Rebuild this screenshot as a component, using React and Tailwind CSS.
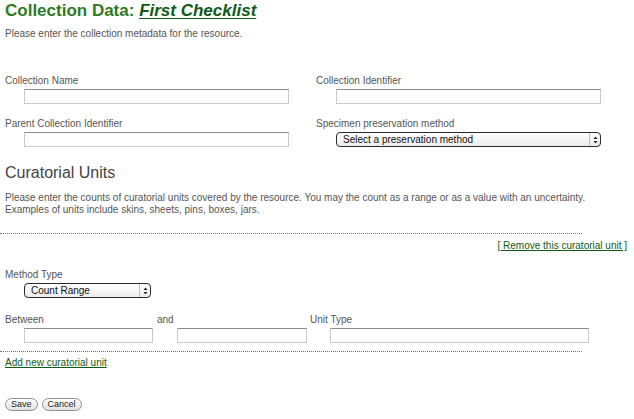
import React from 'react'

const font = { fontFamily: '"Liberation Sans", Arial, sans-serif' }

function TextInput({ className = '' }) {
  return (
    <input
      type="text"
      className={`block h-[15px] border border-[#c9c9c9] border-t-[#8c8c8c] bg-white outline-none ${className}`}
    />
  )
}

function MacSelect({ label, className = '' }) {
  return (
    <div
      className={`flex h-[15px] items-stretch rounded-[4px] border border-[#2a2a2a] bg-gradient-to-b from-white to-[#ececec] ${className}`}
    >
      <span className="flex-1 truncate pl-[6px] text-[10px] leading-[13px] text-[#111]">{label}</span>
      <span className="flex w-[11px] flex-col items-center justify-center border-l border-[#bdbdbd]">
        <svg width="5" height="8" viewBox="0 0 5 8">
          <path d="M2.5 0.5 L4.5 3 L0.5 3 Z" fill="#222" />
          <path d="M2.5 7.5 L4.5 5 L0.5 5 Z" fill="#222" />
        </svg>
      </span>
    </div>
  )
}

function Field({ label, children, className = '' }) {
  return (
    <div className={className}>
      <div className="h-[13px] leading-[13px]">{label}</div>
      <div className="mt-[2px]">{children}</div>
    </div>
  )
}

function Dotted() {
  return <div className="-ml-[5px] w-[582px] border-t border-dotted border-[#777]" />
}

export default function App() {
  return (
    <div className="min-h-[419px] bg-white pl-[5px] text-[10px] text-[#555]" style={font}>
      <h1 className="pt-[1px] text-[17px] font-bold leading-[20px] text-[#2f7a1f]">
        Collection Data:{' '}
        <a href="#" className="italic text-[#0f5a16] underline decoration-1 underline-offset-2">
          First Checklist
        </a>
      </h1>
      <p className="mt-[7px] leading-[12px]">Please enter the collection metadata for the resource.</p>

      <div className="mt-[34px] grid grid-cols-[311px_1fr] gap-y-[13px]">
        <Field label="Collection Name">
          <TextInput className="ml-[19px] w-[265px]" />
        </Field>
        <Field label="Collection Identifier">
          <TextInput className="ml-[20px] w-[265px]" />
        </Field>
        <Field label="Parent Collection Identifier">
          <TextInput className="ml-[19px] w-[265px]" />
        </Field>
        <Field label="Specimen preservation method">
          <MacSelect label="Select a preservation method" className="ml-[20px] mt-[1px] w-[265px]" />
        </Field>
      </div>

      <h2 className="mt-[16px] text-[16px] leading-[20px] text-[#444]">Curatorial Units</h2>
      <p className="mt-[9px] w-[615px] leading-[12px]">
        Please enter the counts of curatorial units covered by the resource. You may the count as a range or as a value with an uncertainty.
        <br />
        Examples of units include skins, sheets, pins, boxes, jars.
      </p>

      <div className="mt-[17px]">
        <Dotted />
      </div>
      <div className="mt-[5px] flex w-[622px] justify-end leading-[13px]">
        <a href="#" className="text-[#0f5a16] underline">[ Remove this curatorial unit ]</a>
      </div>

      <Field label="Method Type" className="mt-[16px]">
        <MacSelect label="Count Range" className="ml-[19px] w-[127px]" />
      </Field>

      <div className="mt-[15px] flex">
        <Field label="Between" className="w-[152px]">
          <TextInput className="ml-[19px] w-[129px]" />
        </Field>
        <Field label="and" className="w-[153px]">
          <TextInput className="ml-[20px] w-[130px]" />
        </Field>
        <Field label="Unit Type">
          <TextInput className="ml-[20px] w-[259px]" />
        </Field>
      </div>

      <div className="mt-[8px]">
        <Dotted />
      </div>
      <a href="#" className="mt-[4px] block w-fit leading-[13px] text-[#0f5a16] underline">
        Add new curatorial unit
      </a>

      <div className="mt-[29px] flex gap-[4px]">
        <button className="h-[13px] rounded-full border border-[#8f8f8f] bg-gradient-to-b from-white to-[#e2e2e2] px-[5px] text-[9px] leading-[11px] text-[#222]">
          Save
        </button>
        <button className="h-[13px] rounded-full border border-[#8f8f8f] bg-gradient-to-b from-white to-[#e2e2e2] px-[5px] text-[9px] leading-[11px] text-[#222]">
          Cancel
        </button>
      </div>
    </div>
  )
}
